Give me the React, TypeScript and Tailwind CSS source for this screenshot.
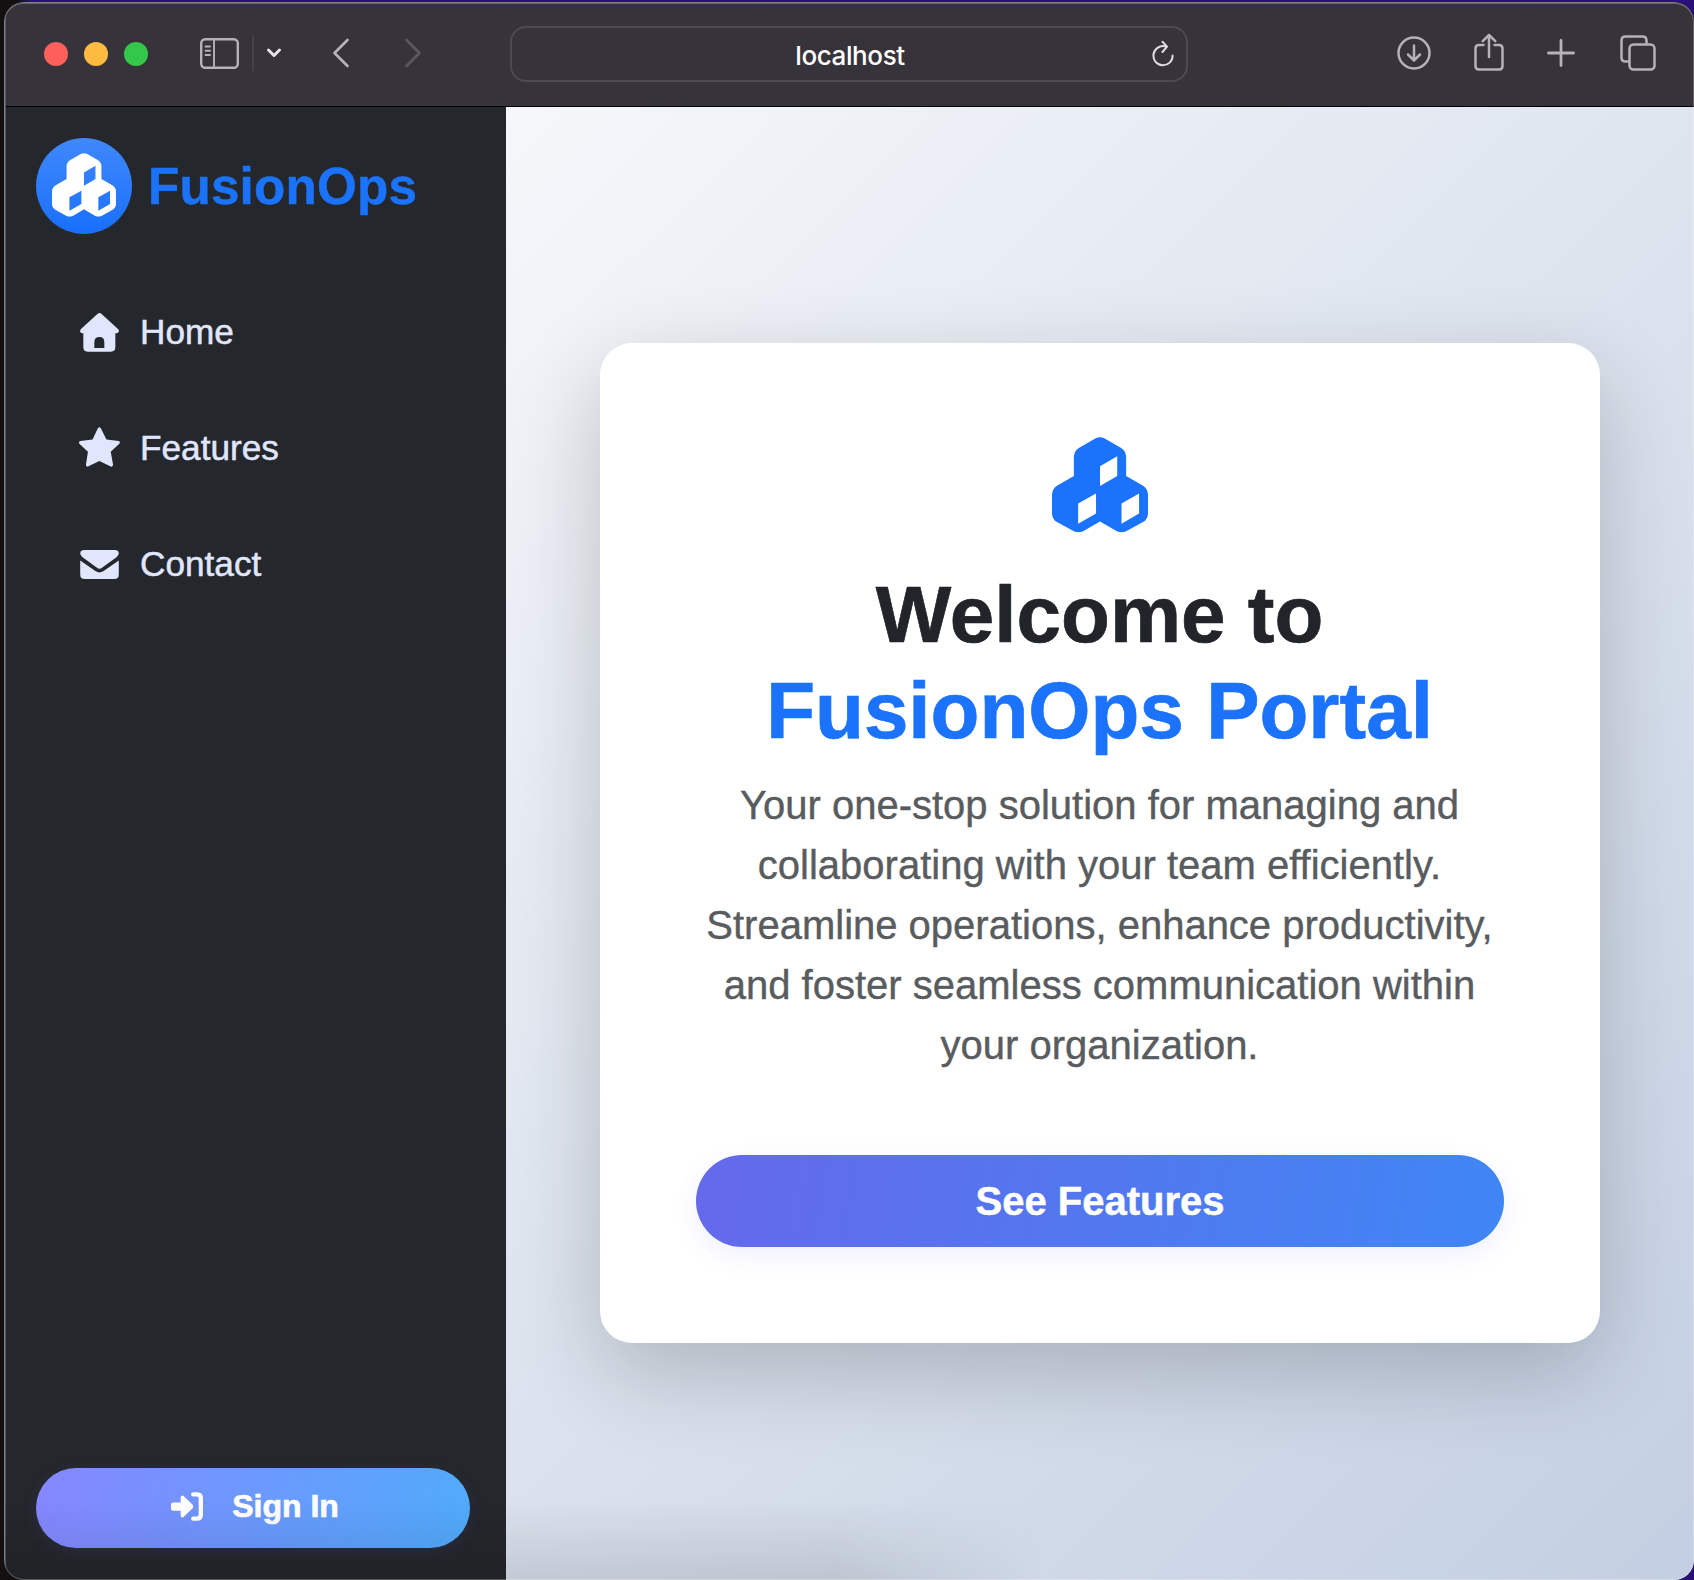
import React from "react";

function Cubes({ className }: { className?: string }) {
  return (
    <svg viewBox="155 110 290 290" className={className} fill="currentColor">
      <path
        fillRule="evenodd"
        d="M287 113.500Q300 108 313 113.500L364 143Q379 153 379 171V228L430 257Q445 267 445 285V340Q445 358 430 367L379 395Q366 401 351 395L300 365L249 395Q234 401 221 395L170 367Q155 358 155 340V285Q155 267 170 257L221 228V171Q221 153 236 143ZM300 198V258L352 228V168ZM234 311V372L288 341V281ZM365 311V372L418 341V281Z"
      />
    </svg>
  );
}

function HomeIcon() {
  return (
    <svg viewBox="0 0 117 117" className="h-[39px] w-[39px]" fill="currentColor">
      <path
        fillRule="evenodd"
        d="M53 2.500Q58.500 -2 64 2.500L114 48Q118 52 116 57Q114 61 108 61H106V103Q106 116 93 116H23Q10 116 10 103V61H8Q3 61 1 57Q-1 52 3 48ZM43 105H73V88Q73 72 58 72Q43 72 43 88Z"
      />
    </svg>
  );
}

function StarIcon() {
  return (
    <svg viewBox="0 0 124 120" className="mb-0.5 h-10 w-[41px] shrink-0" fill="currentColor">
      <path d="M57 3Q61.500 -2 66 3L83 37L120 42Q126 44 122 50L96 74L103 114Q102 121 96 119L61.500 102L27 119Q21 121 21 114L27 74L1 50Q-2 44 4 42L41 37Z" />
    </svg>
  );
}

function EnvelopeIcon() {
  return (
    <svg viewBox="0 0 117 88" className="h-[29px] w-[39px]" fill="currentColor">
      <path d="M12 0H105Q116 0 117 10Q117 17 110 22L67 53Q58.500 61 50 53L7 22Q0 17 0 10Q1 0 12 0Z" />
      <path d="M0 32L46 64Q58.500 73 71 64L117 32V74Q117 88 103 88H14Q0 88 0 74Z" />
    </svg>
  );
}

function SignInIcon() {
  return (
    <svg viewBox="0 0 96 86" className="mb-1 h-[29px] w-8" fill="currentColor">
      <path d="M0 37Q0 31 6 31H29V16Q30 8 37 11L65 38Q69 43 65 48L37 75Q30 79 29 70V56H6Q0 56 0 50Z" />
      <path d="M66 0H78Q96 0 96 18V68Q96 86 78 86H66Q60 85 60 79.500Q60 74 66 73H77Q83 73 83 67V19Q83 13 77 13H66Q60 12 60 6.500Q60 1 66 0Z" />
    </svg>
  );
}

const stroke = {
  fill: "none",
  stroke: "currentColor",
  strokeLinecap: "round" as const,
  strokeLinejoin: "round" as const,
};

function Toolbar() {
  return (
    <header className="flex h-[104px] shrink-0 items-center border-b border-black bg-[#37333a] pr-[38px] pb-0.5 pl-[38px] text-[#b6b1ba]">
      <div className="flex gap-4">
        <span className="size-6 rounded-full bg-[#fe5f5a]" />
        <span className="size-6 rounded-full bg-[#febb40]" />
        <span className="size-6 rounded-full bg-[#34c84a]" />
      </div>
      <svg viewBox="0 0 39 31" className="mb-px ml-[52px] h-[31px] w-[39px]" {...stroke} strokeWidth="2.400">
        <rect x="1.200" y="1.200" width="36.600" height="28.600" rx="4" />
        <path d="M14 1V30M5.500 8.500H10M5.500 12.800H10M5.500 17H10" strokeWidth="1.900" />
      </svg>
      <span className="mb-px ml-[13px] h-9 w-0.5 bg-[#454149]" />
      <svg viewBox="0 0 16 12" className="mb-px ml-3 h-3 w-4 text-[#e5e3e7]" {...stroke} strokeWidth="3">
        <path d="M2.500 3L8 8.500L13.500 3" />
      </svg>
      <svg viewBox="0 0 18 30" className="mb-0.5 ml-[50px] h-[30px] w-[18px]" {...stroke} strokeWidth="2.600">
        <path d="M15.500 2L2.500 15L15.500 28" />
      </svg>
      <svg viewBox="0 0 18 30" className="mb-0.5 ml-[54px] h-[30px] w-[18px] text-[#5c5860]" {...stroke} strokeWidth="2.600">
        <path d="M2.500 2L15.500 15L2.500 28" />
      </svg>
      <div className="ml-[88px] grid h-14 w-[678px] grid-cols-[1fr_auto_1fr] items-center rounded-2xl border-2 border-[#4e4a51] px-3">
        <span />
        <span className="mt-1 ml-0.5 font-['Inter',sans-serif] text-[26px] leading-8 font-medium tracking-[-0.400px] text-white">
          localhost
        </span>
        <svg viewBox="0 0 22 27" className="mb-px h-[27px] w-[22px] justify-self-end text-[#dedce0]" {...stroke} strokeWidth="2">
          <path d="M13 6.300A9.600 9.600 0 1 0 20.600 15.500M10.500 1.800L15 6.600L10.500 12" />
        </svg>
      </div>
      <svg viewBox="0 0 34 34" className="mb-px ml-auto h-[34px] w-[34px]" {...stroke} strokeWidth="2.500">
        <circle cx="17" cy="17" r="15.500" />
        <path d="M17 9.500V24M11 18.500L17 24.500L23 18.500" />
      </svg>
      <svg viewBox="0 0 30 38" className="mr-px mb-1 ml-[43px] h-[38px] w-[30px]" {...stroke} strokeWidth="2.500">
        <path d="M9.500 12H5Q1.500 12 1.500 15.500V33Q1.500 36.500 5 36.500H25Q28.500 36.500 28.500 33V15.500Q28.500 12 25 12H20.500M15 24V2M8.700 8.200L15 2L21.300 8.200" />
      </svg>
      <svg viewBox="0 0 28 28" className="mb-0.5 ml-[42px] h-7 w-7" {...stroke} strokeWidth="2.800">
        <path d="M14 1.500V26.500M1.500 14H26.500" />
      </svg>
      <svg viewBox="0 0 36 36" className="mb-0.5 ml-[45px] h-9 w-9" {...stroke} strokeWidth="2.500">
        <rect x="9.500" y="9.500" width="25" height="25" rx="4" />
        <path d="M26.500 9V5.500Q26.500 1.500 22.500 1.500H5.500Q1.500 1.500 1.500 5.500V22.500Q1.500 26.500 5.500 26.500H9" />
      </svg>
    </header>
  );
}

const links = [
  { label: "Home", icon: <HomeIcon /> },
  { label: "Features", icon: <StarIcon /> },
  { label: "Contact", icon: <EnvelopeIcon /> },
];

function Sidebar() {
  return (
    <aside className="flex w-[500px] shrink-0 flex-col bg-[#24272b] px-[30px] pt-[31px] pb-8">
      <div className="flex items-center gap-4">
        <span className="flex size-24 items-center justify-center rounded-full bg-linear-to-b from-[#3f88fc] to-[#176ffb]">
          <Cubes className="mt-[-3px] mr-px size-16 text-white" />
        </span>
        <span className="mt-0.5 text-[51.2px] leading-[60px] font-bold tracking-[0.200px] text-[#1b72fb] [-webkit-text-stroke:0.500px_#1b72fb]">
          FusionOps
        </span>
      </div>
      <nav className="mt-[40px] flex flex-col text-[35.200px] text-[#e1e6ff]">
        {links.map((l) => (
          <a key={l.label} className="flex h-[116px] items-center">
            <span className="ml-[42px] flex w-[42px] justify-center">{l.icon}</span>
            <span className="ml-[20px] leading-[54px] [-webkit-text-stroke:0.500px_#e1e6ff]">{l.label}</span>
          </a>
        ))}
      </nav>
      <button className="mt-auto flex h-20 w-[434px] items-center justify-center rounded-full bg-linear-[100deg] from-[#8687ff] to-[#51abfc] pl-0.5 text-[32px] font-bold text-white shadow-[0_4px_16px_rgba(99,102,241,0.12)]">
        <SignInIcon />
        <span className="-mr-0.5 mb-1 ml-[29px] [-webkit-text-stroke:0.700px_white]">Sign In</span>
      </button>
    </aside>
  );
}

export default function App() {
  return (
    <div className="h-[1580px] w-[1694px] overflow-hidden bg-linear-to-r from-[#121010] from-0% via-[#121010] via-1% to-[#2a0f78] to-2% pt-[2px] pl-1 font-['Liberation_Sans',Arial,sans-serif]">
      <div className="relative flex h-[1578px] w-[1690px] flex-col overflow-hidden rounded-[20px] bg-[#55565a] pt-px pl-0.5">
        <Toolbar />
        <div className="flex min-h-0 flex-1">
          <Sidebar />
          <main className="flex flex-1 items-start justify-center bg-linear-[135deg] from-[#f5f7fa] to-[#c3cfe2] pt-[236px]">
            <section className="flex h-[1000px] w-[1000px] flex-col items-center rounded-[32px] bg-white px-24 pt-[94px] text-center shadow-[0_30px_90px_rgba(0,0,0,0.2)]">
              <Cubes className="mr-px size-24 text-[#1b72fb]" />
              <h1 className="mt-[34px] mr-px text-[80px] leading-[96px] font-bold whitespace-nowrap text-[#212429] [-webkit-text-stroke:0.700px_#212429]">
                Welcome to
                <br />
                <span className="text-[#1b72fb] [-webkit-text-stroke:0.700px_#1b72fb]">FusionOps Portal</span>
              </h1>
              <p className="mt-4 mr-px text-[40px] leading-[60px] whitespace-nowrap text-[#595c5f] [-webkit-text-stroke:0.400px_#595c5f]">
                Your one-stop solution for managing and
                <br />
                collaborating with your team efficiently.
                <br />
                Streamline operations, enhance productivity,
                <br />
                and foster seamless communication within
                <br />
                your organization.
              </p>
              <button className="mt-20 h-[92px] w-[808px] rounded-full bg-linear-[100deg] from-[#6569eb] to-[#3f86f4] text-[40px] font-bold text-white shadow-[0_8px_24px_rgba(99,102,241,0.1)] [-webkit-text-stroke:0.500px_white]">
                See Features
              </button>
            </section>
          </main>
        </div>
        <div className="pointer-events-none absolute bottom-0 left-0 h-20 w-[1040px] bg-linear-to-t from-black/10 to-transparent [mask-image:linear-gradient(to_right,black_80%,transparent)]" />
        <div className="pointer-events-none absolute inset-0 rounded-[20px] border border-t-2 border-white/25" />
      </div>
    </div>
  );
}
